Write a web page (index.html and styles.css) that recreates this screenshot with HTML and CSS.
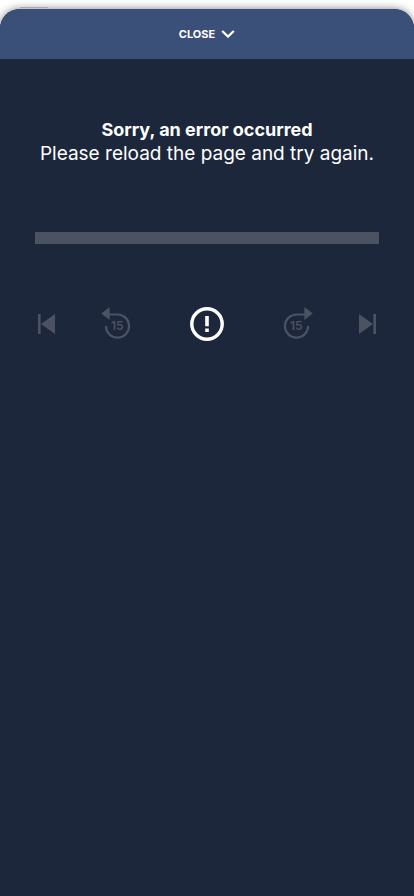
FILE: index.html
```html
<!DOCTYPE html>
<html lang="en">
<head>
<meta charset="utf-8">
<meta name="viewport" content="width=device-width, initial-scale=1">
<title>Player</title>
<link rel="stylesheet" href="styles.css">
</head>
<body>
<main class="sheet">
  <button class="close" type="button">
    <span>CLOSE</span>
    <svg class="chevron" viewBox="0 0 14 8" aria-hidden="true"><path d="M1.2 1 7 6.6 12.8 1"/></svg>
  </button>
  <section class="player">
    <div class="message" role="alert">
      <h1 class="title">Sorry, an error occurred</h1>
      <p class="text">Please reload the page and try again.</p>
    </div>
    <div class="track" role="progressbar" aria-label="Playback progress"></div>
    <div class="controls">
      <div class="group">
        <button class="control skip" type="button" aria-label="Previous" disabled>
          <svg viewBox="0 0 24 36"><path class="solid" d="M3 8h2.6v20H3zM20 8v20L6 18z"/></svg>
        </button>
        <button class="control seek" type="button" aria-label="Back 15 seconds" disabled>
          <svg viewBox="0 0 32 36"><path class="solid" d="M1.3 7.5 9.6 1v13z"/><path class="line" d="M8 8.5h9.5A11.6 11.6 0 1 1 5.9 20.1"/><text x="17.2" y="24.3">15</text></svg>
        </button>
      </div>
      <button class="control status" type="button" aria-label="Playback error">
        <svg viewBox="0 0 36 36"><circle class="ring" cx="18" cy="18" r="15.2"/><path class="solid" d="M16.2 10h3.6v10.2h-3.6zM16.2 22.5h3.6V26h-3.6z"/></svg>
      </button>
      <div class="group">
        <button class="control seek" type="button" aria-label="Forward 15 seconds" disabled>
          <svg viewBox="0 0 32 36"><path class="solid" d="M30.7 7.5 22.4 1v13z"/><path class="line" d="M24 8.5h-9.5A11.6 11.6 0 1 0 26.1 20.1"/><text x="14.2" y="24.3">15</text></svg>
        </button>
        <button class="control skip" type="button" aria-label="Next" disabled>
          <svg viewBox="0 0 24 36"><path class="solid" d="M18.4 8H21v20h-2.6zM4 8v20l14-10z"/></svg>
        </button>
      </div>
    </div>
  </section>
</main>
</body>
</html>
```
FILE: styles.css
```css
* {
  box-sizing: border-box;
}

body {
  margin: 0;
  min-height: 100vh;
  padding-top: 9px;
  display: flex;
  background: #fff;
  font-family: Inter, "Liberation Sans", sans-serif;
}

button {
  border: 0;
  padding: 0;
  background: none;
  font: inherit;
  color: inherit;
}

.sheet {
  position: relative;
  flex: 1;
  display: flex;
  flex-direction: column;
  border-radius: 20px 20px 0 0;
  background: #1d273b;
  color: #fff;
  box-shadow: 0 0 8px rgba(0, 0, 0, 0.5);
}

.sheet::before {
  content: "";
  position: absolute;
  top: -2px;
  left: 20px;
  width: 28px;
  height: 1px;
  background: #aaa;
}

.close {
  display: flex;
  align-items: center;
  justify-content: center;
  gap: 6px;
  height: 50px;
  border-radius: 20px 20px 0 0;
  background: #3b5078;
  font-size: 11px;
  font-weight: 700;
}

.chevron {
  width: 14px;
  height: 8px;
  fill: none;
  stroke: #fff;
  stroke-width: 2.2;
}

.player {
  padding: 59px 35px;
}

.message {
  font-size: 19px;
  line-height: 24px;
  text-align: center;
}

.title {
  margin: 0;
  font-size: 18px;
  font-weight: 700;
}

.text {
  margin: 0;
}

.track {
  height: 12px;
  margin: 66px 0 62px;
  background: #4b5262;
}

.controls,
.group {
  display: flex;
  align-items: center;
}

.controls {
  justify-content: space-between;
}

.group {
  gap: 41px;
}

.control {
  height: 36px;
  color: #4b5262;
}

.control svg {
  display: block;
  width: 100%;
  height: 100%;
}

.skip {
  width: 24px;
}

.seek {
  width: 32px;
}

.status {
  width: 36px;
  color: #fff;
}

.solid {
  fill: currentColor;
}

.line,
.ring {
  fill: none;
  stroke: currentColor;
}

.line {
  stroke-width: 2.2;
}

.ring {
  stroke-width: 3.4;
}

.control text {
  fill: currentColor;
  font-size: 12px;
  font-weight: 600;
  text-anchor: middle;
}
```
